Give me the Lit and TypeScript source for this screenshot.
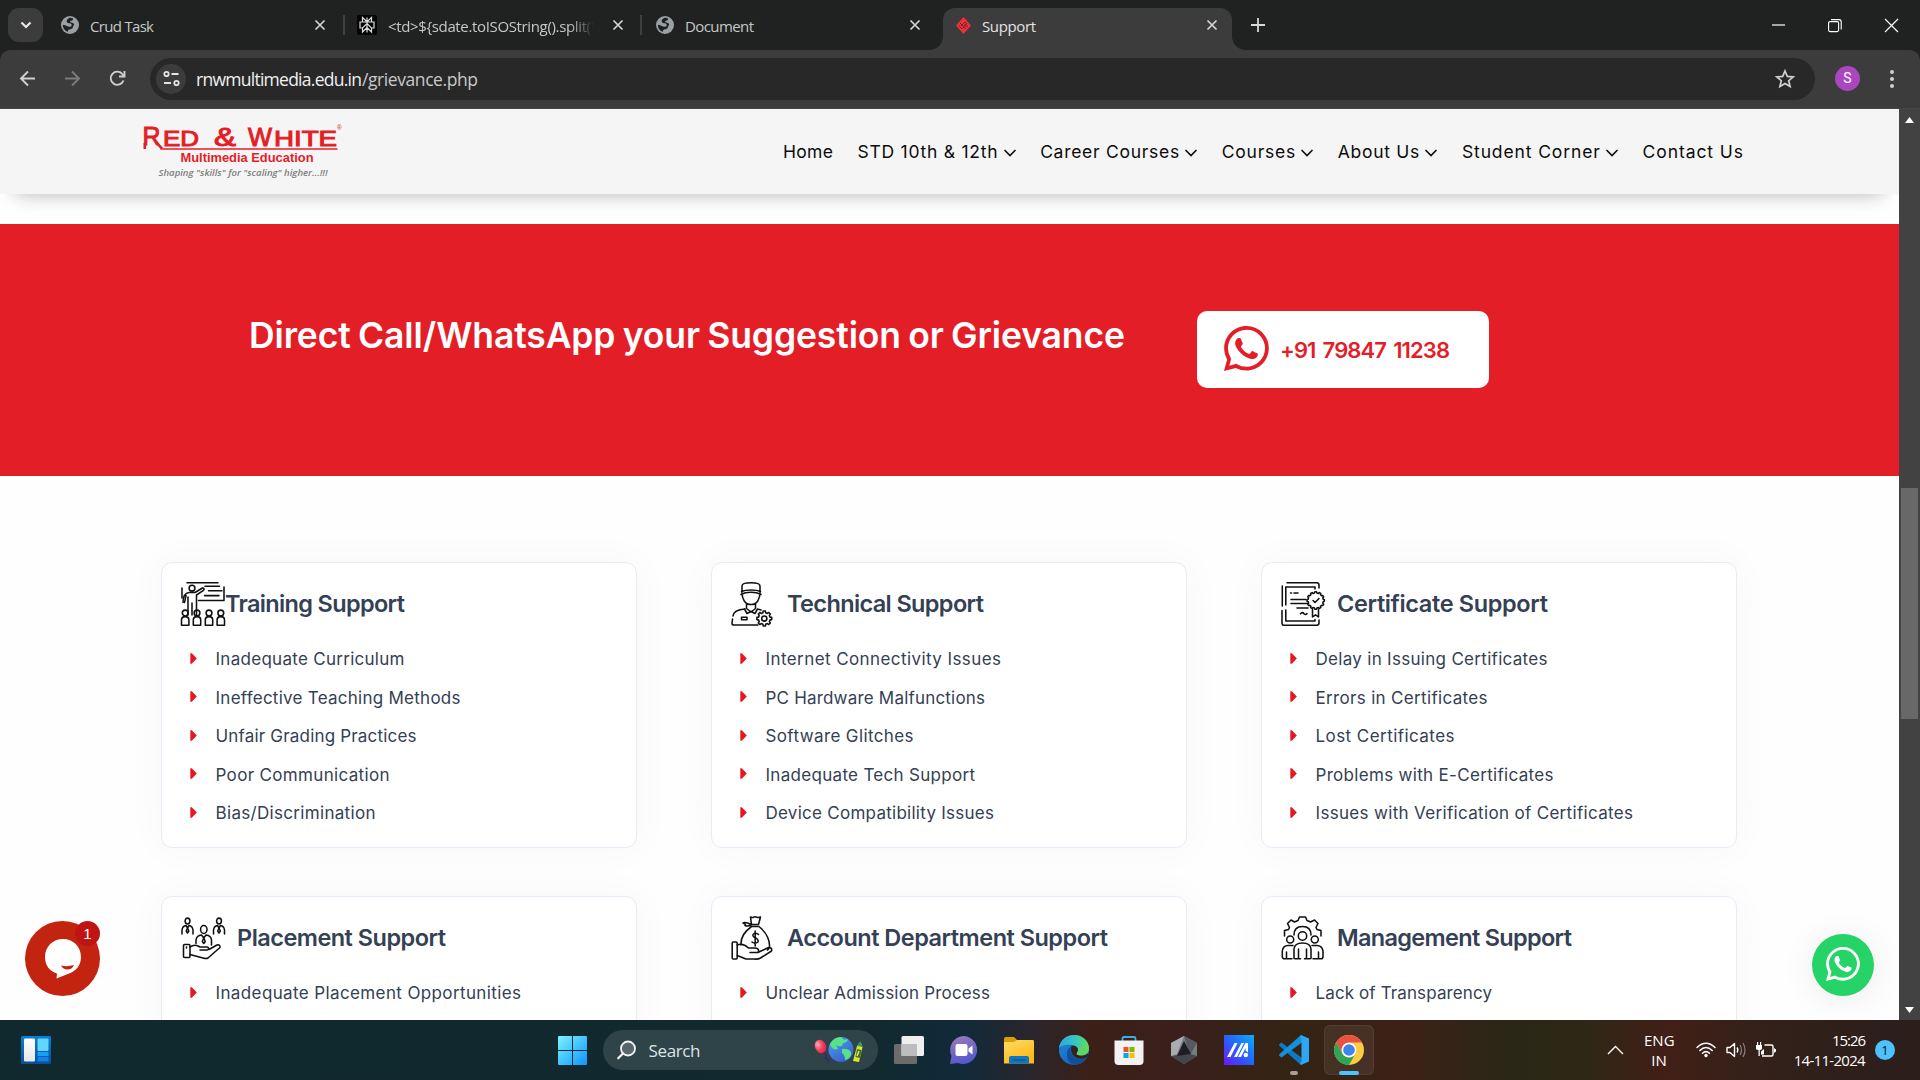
import { LitElement, html, svg, css } from "lit";
import { customElement, property } from "lit/decorators.js";

/** Single line of text whose tracking is adjusted so it fills a given width. */
@customElement("fit-text")
class FitText extends LitElement {
  @property({ type: Number }) w = 0;
  @property() text = "";
  static styles = css`
    :host { display: inline-block; white-space: nowrap; flex: none; }
    .t { display: inline-block; white-space: pre; }
  `;
  render() {
    return html`<span class="t">${this.text}</span>`;
  }
  firstUpdated() {
    const t = this.renderRoot.querySelector(".t") as HTMLElement;
    t.style.letterSpacing = "0px";
    const natural = t.getBoundingClientRect().width;
    const gap = (this.w - natural) / Math.max(1, this.text.length - 1);
    t.style.letterSpacing = gap.toFixed(3) + "px";
    this.style.width = this.w + "px";
  }
}

const fit = (text: string, w: number) => html`<fit-text .text=${text} .w=${w}></fit-text>`;

const WA =
  "M13.601 2.326A7.85 7.85 0 0 0 7.994 0C3.627 0 .068 3.558.064 7.926c0 1.399.366 2.76 1.057 3.965L0 16l4.204-1.102a7.9 7.9 0 0 0 3.79.965h.004c4.368 0 7.926-3.558 7.93-7.93A7.9 7.9 0 0 0 13.6 2.326zM7.994 14.521a6.6 6.6 0 0 1-3.356-.92l-.24-.144-2.494.654.666-2.433-.156-.251a6.56 6.56 0 0 1-1.007-3.505c0-3.626 2.957-6.584 6.591-6.584a6.56 6.56 0 0 1 4.66 1.931 6.56 6.56 0 0 1 1.928 4.66c-.004 3.639-2.961 6.592-6.592 6.592m3.615-4.934c-.197-.099-1.17-.578-1.353-.646-.182-.065-.315-.099-.445.099-.133.197-.513.646-.627.775-.114.133-.232.148-.43.05-.197-.1-.836-.308-1.592-.985-.59-.525-.985-1.175-1.103-1.372-.114-.198-.011-.304.088-.403.087-.088.197-.232.296-.346.1-.114.133-.198.198-.33.065-.134.034-.248-.015-.347-.05-.099-.445-1.076-.612-1.47-.16-.389-.323-.335-.445-.34-.114-.007-.247-.007-.38-.007a.73.73 0 0 0-.529.247c-.182.198-.691.677-.691 1.654s.71 1.916.81 2.049c.098.133 1.394 2.132 3.383 2.992.47.205.84.326 1.129.418.475.152.904.129 1.246.08.38-.058 1.171-.48 1.338-.943.164-.464.164-.86.114-.943-.049-.084-.182-.133-.38-.232";

/** Outline of a cog with n teeth. */
function cog(cx: number, cy: number, r: number, R: number, n: number): string {
  const step = (Math.PI * 2) / n;
  const p = (rad: number, a: number) => `${(cx + rad * Math.sin(a)).toFixed(2)} ${(cy - rad * Math.cos(a)).toFixed(2)}`;
  let d = "";
  for (let i = 0; i < n; i++) {
    const a = i * step;
    d += `${i ? "L" : "M"}${p(r, a - step * 0.3)}L${p(R, a - step * 0.19)}L${p(R, a + step * 0.19)}L${p(r, a + step * 0.3)}`;
  }
  return d + "Z";
}

const icons: Record<string, unknown> = {
  training: svg`
    <path d="M6 .8H37M1 6V16M43 5V18.5H17.5M24 4.2H38.5M27.5 8.8H41M23.5 13.6H38"/>
    <circle cx="11" cy="6.2" r="2.9"/>
    <path d="M2 20.5C2 15 3.500 11 8 10.500H14L21.500 6C23 5.600 23.500 7.400 22.500 8.300L15.500 13V33M7 15V33M11 21V33M5 13.500L3.500 20.500"/>
    ${[4.2, 16, 28, 39.8].map((x) => svg`<circle cx=${x} cy="31" r="2.900"/><path d=${`M${x - 3.7} 43.300V38Q${x - 3.7} 34.600 ${x} 34.600Q${x + 3.7} 34.600 ${x + 3.7} 38V43.300Z`}/>`)}`,
  technical: svg`
    <path d="M11 9.500V4C11 1.500 16 .8 20 .8S29 1.500 29 4V9.500M10.500 9.500C15 7.500 25 7.500 29.500 9.500M10 12.500C15 9.500 25 9.500 30 12.500M11 10.500C11 17 14 22.500 20 22.500S29 17 29 10.500M15.500 22V26.500L20 30L24.500 26.500V22M13.500 27L16 31.500L20 29.500L24 31.500L26.500 27M14 27C7 27.500 2.500 29 2 34M1.500 37L1 41.500Q1 43 3 43H27M26.500 27L30 28"/>
    <rect x="10.500" y="35.300" width="5.500" height="2.500"/>
    <path d=${cog(33.3, 36.5, 5.9, 7.5, 8)}/><circle cx="33.300" cy="36.500" r="2.600"/>`,
  certificate: svg`
    <path d="M6 .8H36Q38 1 38 3V6M1.300 24V4M1 28.500V41Q1 43.300 3 43.300H36Q38 43 38 41V38M34 7V5H4.800V23M4.800 28V39H34V37.500M9.500 11H10.500M13 11H17M10 17.500H25M10 21.500H27M16 26H27M19.500 31.800Q21.500 29.500 23 31.700Q24.500 33.500 26 31.500M31.500 27V35L34.500 32.800L37.500 35V27"/>
    <path d=${cog(34.7, 18.5, 7.6, 8.7, 12)}/><path d="M32 18.500L34 20.500L38 16.500"/>`,
  placement: svg`
    ${[[6.5, 5], [38, 5]].map(([x, y]) => svg`<ellipse cx=${x} cy=${y} rx="2.400" ry="2.900"/><path d=${`M${x - 5.5} 18V14Q${x - 5} 10 ${x - 1.5} 9.500L${x} 12L${x + 1.5} 9.500Q${x + 5} 10 ${x + 5.5} 14V18M${x} 12L${x - 1.3} 15L${x} 17L${x + 1.3} 15Z`}/>`)}
    <ellipse cx="22.800" cy="13.500" rx="3.200" ry="4"/>
    <path d="M15 27.500V24Q15.500 19.500 20.500 19L22.800 22L25 19Q30 19.500 30.500 24V29M22.800 22L21.300 25.500L22.800 27.500L24.300 25.500Z"/>
    <rect x="2.500" y="28.500" width="6.500" height="13" rx="1"/>
    <path d="M9 31Q14 27.500 19 31H26Q29 32 26.500 34H19M28 33.500L36 29Q39.500 28.300 39 31.500L27 42Q25.500 43 22 42L9 38.500M5.500 31V32"/>`,
  account: svg`
    <path d="M19.500 1Q21 2 22.500 1.200Q24 .3 26 1.300Q28 2 29.500 1L27.500 8.500H20.500ZM20.500 8.500Q14 5.500 12 7Q15 8 14 9.500Q17 11 20.500 8.500M20 10.500H28M20 11C13 16 9.500 22 10 29M28.500 11C36 17 39 25 38.500 31Q38 33 36.500 34"/>
    <path d="M27.500 18.500Q25.500 16.500 23 17.500Q20.500 19.500 23.500 21.500Q28 23 27 26Q24 28.500 21 26M24.200 15V30"/>
    <rect x="1.200" y="26" width="5" height="17" rx="1"/>
    <path d="M6.200 29Q12 26.500 17.500 32H24.500Q29 33 27 36.500H19M28 36L37.500 31.500Q41.500 31.500 40.500 35L29.500 42Q27 43.500 23 43H15L6.200 39.500"/>`,
  management: svg`
    <path d="M3.500 20V14.500L7.500 13.500L8.500 11.500L6.500 7.500L10 4L13.500 6L17 4.500L18.500 1H24.500L26 4.500L29.500 6L33.500 4L37 7.500L35 11.500L36 13.500L40 14.500V20M13 19Q13 10.500 21.500 10.500T30 19"/>
    <circle cx="21.500" cy="20" r="4.200"/><circle cx="9.200" cy="23.500" r="3.500"/><circle cx="33.800" cy="23.500" r="3.500"/>
    <path d="M1.300 41V35Q2 29.500 7 29.500H12M42 41V35Q41 29.500 36 29.500H31M13 42.500V33Q13.500 27 21.500 27T30 33V42.500M17.500 33V42.500M25.500 33V42.500M5.500 36V42.500M37.500 36V42.500M1.300 40.500Q1.300 42.800 3.500 42.800H11M14 42.800H19.500M23.500 42.800H29M32 42.800H40Q42 42.800 42 40.500"/>`,
};

type Item = [string, number];
const cards: { icon: string; title: Item; tight?: boolean; items: Item[] }[] = [
  { icon: "training", title: ["Training Support", 180], tight: true, items: [["Inadequate Curriculum", 189], ["Ineffective Teaching Methods", 245], ["Unfair Grading Practices", 201], ["Poor Communication", 174], ["Bias/Discrimination", 160]] },
  { icon: "technical", title: ["Technical Support", 197], items: [["Internet Connectivity Issues", 235.5], ["PC Hardware Malfunctions", 219.5], ["Software Glitches", 148], ["Inadequate Tech Support", 209.5], ["Device Compatibility Issues", 228.5]] },
  { icon: "certificate", title: ["Certificate Support", 211], items: [["Delay in Issuing Certificates", 232], ["Errors in Certificates", 172], ["Lost Certificates", 139], ["Problems with E-Certificates", 238], ["Issues with Verification of Certificates", 317.5]] },
  { icon: "placement", title: ["Placement Support", 209], items: [["Inadequate Placement Opportunities", 305.5]] },
  { icon: "account", title: ["Account Department Support", 321], items: [["Unclear Admission Process", 224.5]] },
  { icon: "management", title: ["Management Support", 235], items: [["Lack of Transparency", 176.5]] },
];

const nav: [string, number, boolean][] = [
  ["Home", 50, false],
  ["STD 10th & 12th", 140, true],
  ["Career Courses", 139, true],
  ["Courses", 73.5, true],
  ["About Us", 81.5, true],
  ["Student Corner", 138, true],
  ["Contact Us", 100.5, false],
];

const globe = html`<svg class="fav" viewBox="0 0 18 18"><circle cx="9" cy="9" r="9" fill="#9aa0a6"/><path d="M8.500 1.800Q5 3.600 5.800 6Q6.500 7.500 9.300 7.200Q11.200 8 10.600 10Q9.500 11.400 7 10.400Q4 9 1.800 8.800Q1.800 14 6.800 16Q6.500 13.500 9.500 13.300Q12.300 12.500 12.100 10.200Q14 9 12.500 7.200Q9 6.500 9 5Q12.500 4.500 12 2.400Q10 1.500 8.500 1.800Z" fill="#202221"/></svg>`;
const cross = html`<svg class="x" viewBox="0 0 12 12"><path d="M1.500 1.500L10.500 10.500M10.500 1.500L1.500 10.500" stroke="#d4d4d4" stroke-width="1.700"/></svg>`;

@customElement("app-root")
class AppRoot extends LitElement {
  static styles = css`
    :host { display: block; width: 1920px; height: 1080px; overflow: hidden; position: relative; }
    * { box-sizing: border-box; }
    svg { display: block; flex: none; overflow: visible; }
    .screen { display: flex; flex-direction: column; height: 1080px; }

    .tabs { height: 50px; background: #202221; display: flex; align-items: flex-end; padding-left: 8px; font: 15px/34px "Open Sans", sans-serif; color: #c7c7c7; }
    .drop { width: 35px; height: 34px; margin: 0 0 8px; border-radius: 11px; background: #3c3c3c; display: grid; place-items: center; }
    .tab { height: 42px; display: flex; align-items: center; padding: 0 13px 8px 0; flex: none; }
    .t1 { width: 301px; padding-left: 18px; padding-right: 18px; }
    .t2 { width: 297px; padding-left: 13px; padding-right: 17px; }
    .t3 { width: 302px; padding-left: 15px; padding-right: 22px; }
    .t4 { width: 289px; background: #3c3c3c; border-radius: 12px 12px 0 0; padding-left: 13px; padding-right: 14px; color: #e3e3e3; position: relative; }
    .t4::before, .t4::after { content: ""; position: absolute; bottom: 0; width: 13px; height: 13px; }
    .t4::before { left: -13px; background: radial-gradient(circle at 0 0, transparent 12.500px, #3c3c3c 13px); }
    .t4::after { right: -13px; background: radial-gradient(circle at 100% 0, transparent 12.500px, #3c3c3c 13px); }
    .tab fit-text { margin-left: 11px; padding-top: 1px; }
    .fade { -webkit-mask: linear-gradient(90deg, #000 88%, transparent); mask: linear-gradient(90deg, #000 88%, transparent); }
    .fav { width: 18px; height: 18px; }
    .x { width: 12px; height: 12px; margin-left: auto; }
    .sep { width: 2px; height: 20px; background: #3f4140; margin-bottom: 15px; margin-left: -1px; margin-right: -1px; flex: none; }
    .plus { margin: 0 0 18px 19px; }
    .win { margin-left: auto; display: flex; gap: 43px; padding: 0 22px 18px 0; }

    .bar-back { background: #202221; flex: none; }
    .bar { height: 59px; background: #3c3c3c; border-radius: 10px 10px 0 0; border-bottom: 1px solid #494645; display: flex; align-items: center; padding: 0 22px 1px 18px; }
    .nav-ic { display: flex; gap: 26px; width: 132px; }
    .omni { flex: none; width: 1665px; height: 42px; border-radius: 21px; background: #282828; display: flex; align-items: center; padding: 0 20px 0 6px; font: 17.500px/42px "Open Sans", sans-serif; color: #f0f0f0; }
    .omni fit-text { padding-top: 1px; }
    .site { width: 30px; height: 30px; border-radius: 50%; background: #3c3c3c; margin-right: 10px; display: grid; place-items: center; }
    .path { color: #c8c8c8; }
    .star { margin-left: auto; }
    .ava { width: 25px; height: 25px; border-radius: 50%; background: #ab47bc; color: #fff; font: 14px/25px Roboto, sans-serif; text-align: center; margin-left: 20px; }
    .dots { margin-left: auto; margin-right: 4px; }

    .view { height: 911px; display: flex; overflow: hidden; flex: none; }
    .page { width: 1899px; background: #fefefe; overflow: hidden; font-family: Inter, sans-serif; }
    .head { height: 85px; background: #f5f5f5; box-shadow: 0 14px 16px -14px rgba(0,0,0,.22), 0 26px 24px -22px rgba(0,0,0,.07); display: flex; align-items: center; padding-left: 142px; position: relative; }
    .menu { margin-left: auto; margin-right: 156px; display: flex; gap: 24.600px; font: 400 17.500px/20px Inter, sans-serif; color: #0c0c0c; }
    .entry { display: flex; align-items: center; gap: 6px; }
    .entry svg { margin-top: 3px; }

    .call { margin-top: 30px; height: 252px; background: #e41e26; display: flex; padding: 87px 0 0 249px; align-items: flex-start; }
    .call h2 { margin: 0; width: 948px; font-size: 35.500px; line-height: 50px; font-weight: 600; color: #fff; word-spacing: -1.500px; }
    .phone { width: 292px; height: 77px; border-radius: 10px; background: #fff; display: flex; align-items: center; gap: 11px; padding-left: 27px; color: #e41e26; font-size: 22px; font-weight: 600; line-height: 30px; word-spacing: 2.500px; }
    .phone svg { margin-bottom: 3px; }

    .grid { display: grid; grid-template-columns: repeat(3, 476px); column-gap: 74px; row-gap: 48px; padding: 86px 0 0 161px; }
    .card { height: 286px; border: 1px solid #e6ebf5; border-radius: 11px; background: #fff; box-shadow: 0 0 40px rgba(0,0,0,.035); padding: 19px 19px 0; }
    .title { height: 44px; display: flex; align-items: center; gap: 12px; font-size: 23.500px; font-weight: 600; color: #344054; line-height: 44px; }
    .title.tight { gap: 0; }
    .ico { fill: none; stroke: #101010; stroke-width: 1.550; stroke-linecap: round; stroke-linejoin: round; }
    .list { list-style: none; margin: 13px 0 0; padding: 0; font-size: 17px; color: #344054; }
    .list li { height: 38.500px; line-height: 38.500px; display: flex; align-items: center; padding-left: 9px; gap: 18.500px; }
    .list fit-text { padding-top: 2px; }

    .rail { width: 21px; background: #424242; display: flex; flex-direction: column; align-items: center; padding: 8px 0 7px; }
    .thumb { width: 17px; height: 231px; background: #686868; margin-top: 365px; margin-bottom: auto; }

    .float { position: absolute; border-radius: 50%; display: grid; place-items: center; }
    .chat { left: 25px; top: 921px; width: 75px; height: 75px; background: #c32410; }
    .count { left: 75px; top: 921px; width: 25px; height: 25px; background: #c01313; color: #fff; font: 15px/25px "Liberation Sans", sans-serif; }
    .wa { left: 1812px; top: 934px; width: 62px; height: 62px; background: #25d366; box-shadow: 0 4px 34px rgba(0,0,0,.08); }
    .wa svg { margin-bottom: 2px; }

    .task { height: 60px; flex: none; background: linear-gradient(90deg, #10292e 0, #11292f 880px, #122a39 965px, #2b252b 1035px, #3b2018 1090px, #3a1f1c 1180px, #332413 1290px, #3d2016 1400px, #2a2717 1510px, #2c2815 1575px, #411f16 1665px, #33211a 1760px, #2b1e1b 1920px); display: flex; align-items: center; color: #fff; font: 15px/20px "Open Sans", sans-serif; }
    .widget { margin-left: 21px; margin-top: -1px; }
    .start { margin-left: 507px; }
    .find { width: 275px; height: 40px; border-radius: 20px; margin-left: 16px; background: rgba(255,255,255,.13); display: flex; align-items: center; padding: 0 14px; gap: 12.500px; color: #dfe3e4; font-size: 17px; }
    .find fit-text { padding-top: 1px; }
    .find .deco { margin-left: auto; }
    .apps { display: flex; gap: 25px; margin-left: 16px; align-items: center; }
    .slot { width: 30px; height: 50px; display: grid; place-items: center; position: relative; }
    .on::before { content: ""; position: absolute; inset: 0 -10px; border-radius: 6px; background: rgba(255,255,255,.07); border: 1px solid rgba(255,255,255,.07); }
    .slot i { position: absolute; bottom: 0; left: 11px; width: 8px; height: 4px; border-radius: 2px; background: #a79f9b; }
    .on i { left: 5px; width: 20px; background: #4cc2ff; }
    .tray { margin-left: auto; display: flex; align-items: center; padding-right: 25px; }
    .lang { width: 30px; text-align: center; margin: 0 22px 0 20px; }
    .status { display: flex; gap: 10px; }
    .clock { text-align: right; width: 72px; margin-left: 17px; }
    .note { width: 20px; height: 20px; border-radius: 50%; background: #4cc2ff; color: #111; font-size: 13px; text-align: center; margin-left: 10px; }
  `;

  private tabs() {
    return html`<div class="tabs">
      <div class="drop"><svg width="12" height="8" viewBox="0 0 12 8"><path d="M1.500 1.500L6 6L10.500 1.500" fill="none" stroke="#e8e8e8" stroke-width="2.200"/></svg></div>
      <div class="tab t1">${globe}${fit("Crud Task", 64)}${cross}</div>
      <div class="sep"></div>
      <div class="tab t2">
        <svg width="20" height="20" viewBox="0 0 20 20"><rect width="20" height="20" rx="2" fill="#050505"/><path d="M10 2.500V17.500M5.500 2.500L10 7L14.500 2.500V7H5.500ZM3 7H17V13H14.500L10 8.500L5.500 13H3ZM5.500 13V17L10 12.500L14.500 17V13" fill="none" stroke="#ddd" stroke-width="1.200"/></svg>
        <fit-text class="fade" .text=${"<td>${sdate.toISOString().split('"} .w=${206}></fit-text>${cross}
      </div>
      <div class="sep"></div>
      <div class="tab t3">${globe}${fit("Document", 69)}${cross}</div>
      <div class="tab t4">
        <svg width="15" height="17" viewBox="0 0 15 17"><path d="M7.500 0L15 8.500L7.500 17L0 8.500Z" fill="#f0303a"/><path d="M4 6L10 12M5 9L9 5L11 7L8 8.500L12 9.500M3 8.500L6 12L8 10" fill="none" stroke="#7a2227"/></svg>
        ${fit("Support", 54)}${cross}
      </div>
      <svg class="plus" width="14" height="14" viewBox="0 0 14 14"><path d="M7 0V14M0 7H14" stroke="#d8d8d8" stroke-width="1.800"/></svg>
      <div class="win">
        <svg width="13" height="13" viewBox="0 0 13 13"><path d="M0 6H13" stroke="#fff" stroke-width="1.200"/></svg>
        <svg width="14" height="13" viewBox="0 0 14 13"><rect x=".6" y="2.600" width="10" height="10" rx="1.500" fill="none" stroke="#fff" stroke-width="1.100"/><path d="M3 .6H11Q13.200 .6 13.200 3V10.500" fill="none" stroke="#fff" stroke-width="1.100"/></svg>
        <svg width="13" height="13" viewBox="0 0 13 13"><path d="M0 0L13 13M13 0L0 13" stroke="#fff" stroke-width="1.200"/></svg>
      </div>
    </div>`;
  }

  private toolbar() {
    return html`<div class="bar-back"><div class="bar">
      <div class="nav-ic">
        <svg width="19" height="19" viewBox="0 0 19 19"><path d="M17 9.500H3M10 2.500L3 9.500L10 16.500" fill="none" stroke="#d0d0d0" stroke-width="1.900"/></svg>
        <svg width="19" height="19" viewBox="0 0 19 19"><path d="M2 9.500H16M9 2.500L16 9.500L9 16.500" fill="none" stroke="#7b7b7b" stroke-width="1.900"/></svg>
        <svg width="19" height="19" viewBox="0 0 19 19"><path d="M15.500 11.500A6.600 6.600 0 1 1 14.600 5.300L16.500 7.200M16.500 2V7.500H11" fill="none" stroke="#d0d0d0" stroke-width="1.900"/></svg>
      </div>
      <div class="omni">
        <div class="site"><svg width="17" height="15" viewBox="0 0 17 15"><g fill="none" stroke="#e4e4e4" stroke-width="1.800"><circle cx="3.500" cy="3" r="2.200"/><path d="M8.500 3H15.500M1 12H8"/><circle cx="13.500" cy="12" r="2.200"/></g></svg></div>
        ${fit("rnwmultimedia.edu.in", 166)}<span class="path">${fit("/grievance.php", 116)}</span>
        <svg class="star" width="20" height="20" viewBox="0 0 20 20"><path d="M10 2L12.300 7.400L18.200 7.900L13.700 11.700L15.100 17.500L10 14.400L4.900 17.500L6.300 11.700L1.800 7.900L7.700 7.400Z" fill="none" stroke="#d0d0d0" stroke-width="1.700"/></svg>
      </div>
      <div class="ava">S</div>
      <svg class="dots" width="4" height="20" viewBox="0 0 4 20"><g fill="#d0d0d0"><circle cx="2" cy="3" r="2"/><circle cx="2" cy="10" r="2"/><circle cx="2" cy="17" r="2"/></g></svg>
    </div></div>`;
  }

  private header() {
    return html`<div class="head">
      <svg width="202" height="56" viewBox="0 0 202 56" font-family="Liberation Sans">
        <g fill="#e41e26" stroke="#e41e26" stroke-width="1">
          <text x=".5" y="20.500" font-size="26" textLength="18" lengthAdjust="spacingAndGlyphs">R</text>
          <text x="21" y="21.500" font-size="21.500" textLength="36" lengthAdjust="spacingAndGlyphs">ED</text>
          <text x="72" y="21.500" font-size="26" textLength="22" lengthAdjust="spacingAndGlyphs">&amp;</text>
          <text x="106" y="21.500" font-size="26" textLength="24" lengthAdjust="spacingAndGlyphs">W</text>
          <text x="132" y="21.500" font-size="21.500" textLength="63" lengthAdjust="spacingAndGlyphs">HITE</text>
        </g>
        <path d="M2.800 19V25M14 18L20 24.700" fill="none" stroke="#e41e26" stroke-width="2.600"/>
        <path d="M18.500 25H195.500" stroke="#e41e26" stroke-width="1.500"/>
        <text x="195" y="6" font-size="6.500" fill="#e41e26">®</text>
        <text x="38.500" y="37.500" font-size="12" font-weight="700" fill="#e41e26" textLength="133" lengthAdjust="spacingAndGlyphs">Multimedia Education</text>
        <text x="16.500" y="52" font-size="9.500" font-family="Open Sans" font-style="italic" font-weight="600" fill="#7d7d7d" textLength="169" lengthAdjust="spacingAndGlyphs">Shaping "skills" for "scaling" higher...!!!</text>
      </svg>
      <nav class="menu">${nav.map(([t, w, c]) => html`<span class="entry">${fit(t, w)}${c ? html`<svg width="12" height="8" viewBox="0 0 12 8"><path d="M1 1.500L6 6.500L11 1.500" fill="none" stroke="#111" stroke-width="1.700" stroke-linecap="round"/></svg>` : ""}</span>`)}</nav>
    </div>`;
  }

  private card(c: (typeof cards)[number]) {
    return html`<section class="card">
      <div class="title ${c.tight ? "tight" : ""}"><svg class="ico" width="44" height="44" viewBox="0 0 44 44">${icons[c.icon]}</svg>${fit(c.title[0], c.title[1])}</div>
      <ul class="list">${c.items.map(([t, w]) => html`<li><svg width="7" height="11" viewBox="0 0 7 11"><path d="M.3 .3H1.800L6.800 5.500L1.800 10.700H.3Z" fill="#e8161e"/></svg>${fit(t, w)}</li>`)}</ul>
    </section>`;
  }

  private taskbar() {
    return html`<div class="task">
      <svg class="widget" width="30" height="28" viewBox="0 0 30 28"><defs><linearGradient id="wg" x2="0" y2="1"><stop stop-color="#0a7fd6"/><stop offset="1" stop-color="#0c4d97"/></linearGradient><linearGradient id="ww" x2="0" y2="1"><stop stop-color="#fff"/><stop offset="1" stop-color="#e4e6ea"/></linearGradient></defs><rect width="30" height="28" rx="1.500" fill="url(#wg)"/><rect x="3" y="2.500" width="11" height="23" rx="1.200" fill="url(#ww)"/><rect x="16.500" y="2.500" width="11" height="12.500" rx="1" fill="#63d5ff"/><path d="M16.500 16H27.500V20H16.500Z" fill="#18a0f5"/><path d="M16.500 21H27.500V25.500H16.500Z" fill="#0c84ec"/></svg>
      <svg class="start" width="29" height="29" viewBox="0 0 29 29"><defs><linearGradient id="sg" x2="1" y2="1"><stop stop-color="#7cf3ff"/><stop offset="1" stop-color="#0c95ff"/></linearGradient></defs><path d="M0 1Q0 0 1 0H14V14H0ZM15 0H28Q29 0 29 1V14H15ZM0 15H14V29H1Q0 29 0 28ZM15 15H29V28Q29 29 28 29H15Z" fill="url(#sg)"/></svg>
      <div class="find">
        <svg width="19" height="20" viewBox="0 0 19 20"><circle cx="11" cy="8.500" r="7" fill="#56666b" stroke="#f3f3f3" stroke-width="1.800"/><path d="M6 13.500L1.200 18.300" stroke="#f3f3f3" stroke-width="2.200" stroke-linecap="round"/></svg>
        ${fit("Search", 52)}
        <svg class="deco" width="50" height="28" viewBox="0 0 50 28"><defs><radialGradient id="bal" cx=".35" cy=".3" r=".8"><stop stop-color="#ffb0b5"/><stop offset=".5" stop-color="#f6415f"/><stop offset="1" stop-color="#e01a55"/></radialGradient><linearGradient id="ear" x2=".6" y2="1"><stop stop-color="#45a8ee"/><stop offset="1" stop-color="#3b5fd0"/></linearGradient></defs><path d="M11 17Q12 20 13 20Q9 21 13 23Q16 24 14 27" fill="none" stroke="#35227a" stroke-width="1.200"/><ellipse cx="6.500" cy="10.500" rx="5.500" ry="7" transform="rotate(-25 6.500 10.500)" fill="url(#bal)"/><circle cx="27" cy="13.500" r="12.500" fill="url(#ear)"/><path d="M16 8Q20 1 27 1L30 4L34 3Q33 7 29 7L28 10Q24 11 22 9L24 13Q18 15 16 8ZM28 13Q34 12 37 16Q38 20 34 23L31 24Q31 19 28 17Z" fill="#5be08a"/><path d="M43 10L46.500 6L48.500 11L45 26L39 25Z" fill="#d9e534"/><path d="M43 10L46.500 5L48.500 11Z" fill="#2f9c63"/><path d="M43 13L47.500 14L46 22L41.500 21Z" fill="#476c2c"/><path d="M45 15L43 20" stroke="#e6ef50" stroke-width="1.500"/></svg>
      </div>
      <div class="apps">
        <div class="slot"><svg width="30" height="28" viewBox="0 0 30 28"><rect y="8" width="23" height="20" rx="1.500" fill="#6b6b6b"/><rect x="7.500" y="0" width="22.500" height="20" rx="1.500" fill="#efefef"/><path d="M7.500 8H23V20H7.500Z" fill="#bdbdbd"/></svg></div>
        <div class="slot"><svg width="30" height="28" viewBox="0 0 30 28"><defs><linearGradient id="cg" x1=".2" x2=".5" y2="1"><stop stop-color="#9b78b8"/><stop offset="1" stop-color="#5157cf"/></linearGradient></defs><path d="M15 0A14 14 0 1 1 9 27L1 28L2.500 20A14 14 0 0 1 15 0Z" fill="url(#cg)"/><rect x="6.500" y="8" width="12" height="12" rx="2" fill="#fff"/><path d="M19.500 12.500L23.500 9.500V18.500L19.500 15.500Z" fill="#fff"/></svg></div>
        <div class="slot"><svg width="30" height="27" viewBox="0 0 30 27"><defs><linearGradient id="fg" x2=".6" y2="1"><stop stop-color="#ffdc66"/><stop offset="1" stop-color="#fcb913"/></linearGradient></defs><path d="M0 1.500Q0 0 1.500 0H10L13.500 3.500V8H0Z" fill="#dc9b0a"/><path d="M0 5H10L13 3H29Q30 3 30 4.500V26.500H0Z" fill="url(#fg)"/><path d="M5 26.500V21Q5 19 7 19H23Q25 19 25 21V26.500Z" fill="#0f76c4"/><path d="M8.500 23H21.500" stroke="#0a4c8c"/></svg></div>
        <div class="slot"><svg width="30" height="30" viewBox="0 0 30 30"><defs><linearGradient id="e1" x2="1"><stop stop-color="#2aa9dc"/><stop offset=".55" stop-color="#37c6c0"/><stop offset="1" stop-color="#67dd4d"/></linearGradient><linearGradient id="e2" x2=".7" y2="1"><stop stop-color="#1b8fd8"/><stop offset="1" stop-color="#1560bd"/></linearGradient></defs><circle cx="15" cy="15" r="15" fill="url(#e2)"/><path d="M0 13C1 5 7.500 0 15 0C24 0 30 6.500 30 13C30 18 26 20.500 22.500 20.500C19 20.500 17.500 19 18 17.800C19.500 16 19.500 11 13.500 10C8 9 2.500 10 0 13Z" fill="url(#e1)"/><path d="M12.500 11.500C10 15 12 22 19 23.500C23 24.300 26 23 28 22C25 27 20 30 15 30C10 28 7.500 23 8 18.500C8.300 15 10 12.500 12.500 11.500Z" fill="#124f98"/><path d="M12.500 11C16 10 19 12 19 15Q19 17 17.700 18Q17 19.500 20 20.500L29.500 19L28.500 21.800C25 24 21 24 18 23C13 21 11 16 12.500 11Z" fill="#37211d"/><path d="M18 18C17 19.500 19 20.500 22.500 20.500C26 20.500 29 18.500 29.800 15L20 13Z" fill="#5ed75e"/></svg></div>
        <div class="slot"><svg width="30" height="30" viewBox="0 0 30 30"><path d="M8.500 7V3.500Q8.500 2 10 2H20Q21.500 2 21.500 3.500V7" fill="none" stroke="#32b4ea" stroke-width="1.800"/><path d="M.5 5.500H29.500V26Q29.500 30 25.500 30H4.500Q.5 30 .5 26Z" fill="#f2f2f2"/><path d="M9.500 12H14.500V17H9.500Z" fill="#f25022"/><path d="M15.500 12H20.500V17H15.500Z" fill="#7fba00"/><path d="M9.500 18H14.500V23H9.500Z" fill="#00a4ef"/><path d="M15.500 18H20.500V23H15.500Z" fill="#ffb900"/></svg></div>
        <div class="slot"><svg width="28" height="28" viewBox="0 0 28 28"><path d="M14 0L27 7V20L14 28L1 20V7Z" fill="#777c82"/><path d="M14 0L27 7L20 19Z" fill="#565a60"/><path d="M1 20L14 28L27 20L20 18Z" fill="#43464b"/><path d="M1 7L14 0L7 18L1 20Z" fill="#a9adb2"/><path d="M14 5L21 18L7 20Z" fill="#1d1e21"/></svg></div>
        <div class="slot"><svg width="30" height="30" viewBox="0 0 30 30"><defs><linearGradient id="mg" x1="0" y1="1" x2="1" y2="0"><stop stop-color="#6a17ff"/><stop offset=".5" stop-color="#2563fa"/><stop offset="1" stop-color="#0aaef8"/></linearGradient></defs><rect width="30" height="30" fill="url(#mg)"/><path d="M3 22L10.500 8H13.500L6.500 22ZM10 22L17.500 8H20L13 22ZM14 22L21.500 8H24V17.500L21.500 15.500V13L17 22Z" fill="#fff"/><circle cx="21.800" cy="20" r="2.200" fill="#fff"/></svg></div>
        <div class="slot"><svg width="30" height="30" viewBox="0 0 30 30"><path d="M0 9.500L2.500 7.500L25 24.500L22 30L.5 11Z" fill="#0b7bc8"/><path d="M0 20.500L2.500 22.500L25 6L22 0L.5 19Z" fill="#1490df"/><path d="M22 0L30 3.500V26.500L22 30L21 28.500L22.500 26V4L21 1.500Z" fill="#2ba7f3"/></svg><i></i></div>
        <div class="slot on"><svg width="30" height="30" viewBox="0 0 30 30"><circle cx="15" cy="15" r="15" fill="#fcc934"/><path d="M2 7.500A15 15 0 0 1 28 7.500H15A7.500 7.500 0 0 0 8.500 18.700Z" fill="#ea4335"/><path d="M2 7.500L8.500 18.700A7.500 7.500 0 0 0 21.500 18.700L15 30A15 15 0 0 1 2 7.500Z" fill="#1e9e4a"/><circle cx="15" cy="15" r="7.300" fill="#fff"/><circle cx="15" cy="15" r="5.800" fill="#2f7bee"/></svg><i></i></div>
      </div>
      <div class="tray">
        <svg width="17" height="10" viewBox="0 0 17 10"><path d="M1 9L8.500 1.500L16 9" fill="none" stroke="#fff" stroke-width="1.400"/></svg>
        <div class="lang">ENG<br />IN</div>
        <div class="status">
          <svg width="20" height="16" viewBox="0 0 20 16"><g fill="none" stroke="#fff" stroke-width="1.500" stroke-linecap="round"><path d="M1 5.500Q10-3 19 5.500M3.800 8.500Q10 2.500 16.200 8.500M6.500 11.300Q10 8 13.500 11.300"/></g><circle cx="10" cy="13.500" r="1.700" fill="#fff"/></svg>
          <svg width="20" height="16" viewBox="0 0 20 16"><path d="M1 5.500H4L8.500 1.500V14.500L4 10.500H1ZM11 5.500Q12.800 8 11 10.500" fill="none" stroke="#fff" stroke-width="1.400" stroke-linejoin="round"/><path d="M14 3Q17 8 14 13M17 1Q21 8 17 15" fill="none" stroke="#8a7f7b" stroke-width="1.200"/></svg>
          <svg width="20" height="16" viewBox="0 0 20 16"><path d="M8.500 3H15.500Q17 3 17 4.500V12.500Q17 14 15.500 14H6" fill="none" stroke="#fff" stroke-width="1.400"/><path d="M18 6V11L20 9.500V7.500ZM0 3H6V6.500Q6 8 3.800 8V14H2.500V8Q0 8 0 6.500ZM1 0H2.200V3H1ZM4 0H5.200V3H4ZM5 9.500L8 7V12.500H5Z" fill="#fff"/></svg>
        </div>
        <div class="clock">${fit("15:26", 34)}<br />${fit("14-11-2024", 72)}</div>
        <div class="note">1</div>
      </div>
    </div>`;
  }

  render() {
    return html`<div class="screen">
        ${this.tabs()}${this.toolbar()}
        <div class="view">
          <main class="page">
            ${this.header()}
            <div class="call">
              <h2>${fit("Direct Call/WhatsApp your Suggestion or Grievance", 876)}</h2>
              <div class="phone"><svg width="45" height="45" viewBox="0 0 16 16"><path d=${WA} fill="#e41e26"/></svg>${fit("+91 79847 11238", 170)}</div>
            </div>
            <div class="grid">${cards.map((c) => this.card(c))}</div>
          </main>
          <div class="rail">
            <svg width="9" height="6" viewBox="0 0 9 6"><path d="M4.500 0L9 6H0Z" fill="#fff"/></svg>
            <div class="thumb"></div>
            <svg width="9" height="6" viewBox="0 0 9 6"><path d="M4.500 6L9 0H0Z" fill="#fff"/></svg>
          </div>
        </div>
        ${this.taskbar()}
      </div>
      <div class="float chat"><svg width="36" height="40" viewBox="0 0 36 40"><path d="M18 0C8 0 0 7.500 0 18C0 26.500 5 32.500 12 34.500L11.500 39.500L24 34.500C31 32 36 26.500 36 18C36 7.500 28 0 18 0Z" fill="#fff"/><path d="M16 26.500Q22.500 28 29 26Q27 30.500 22.500 30.500T16 26.500Z" fill="#c32410"/></svg></div>
      <div class="float count">1</div>
      <div class="float wa"><svg width="34" height="34" viewBox="0 0 16 16"><path d=${WA} fill="#fff"/></svg></div>`;
  }
}
